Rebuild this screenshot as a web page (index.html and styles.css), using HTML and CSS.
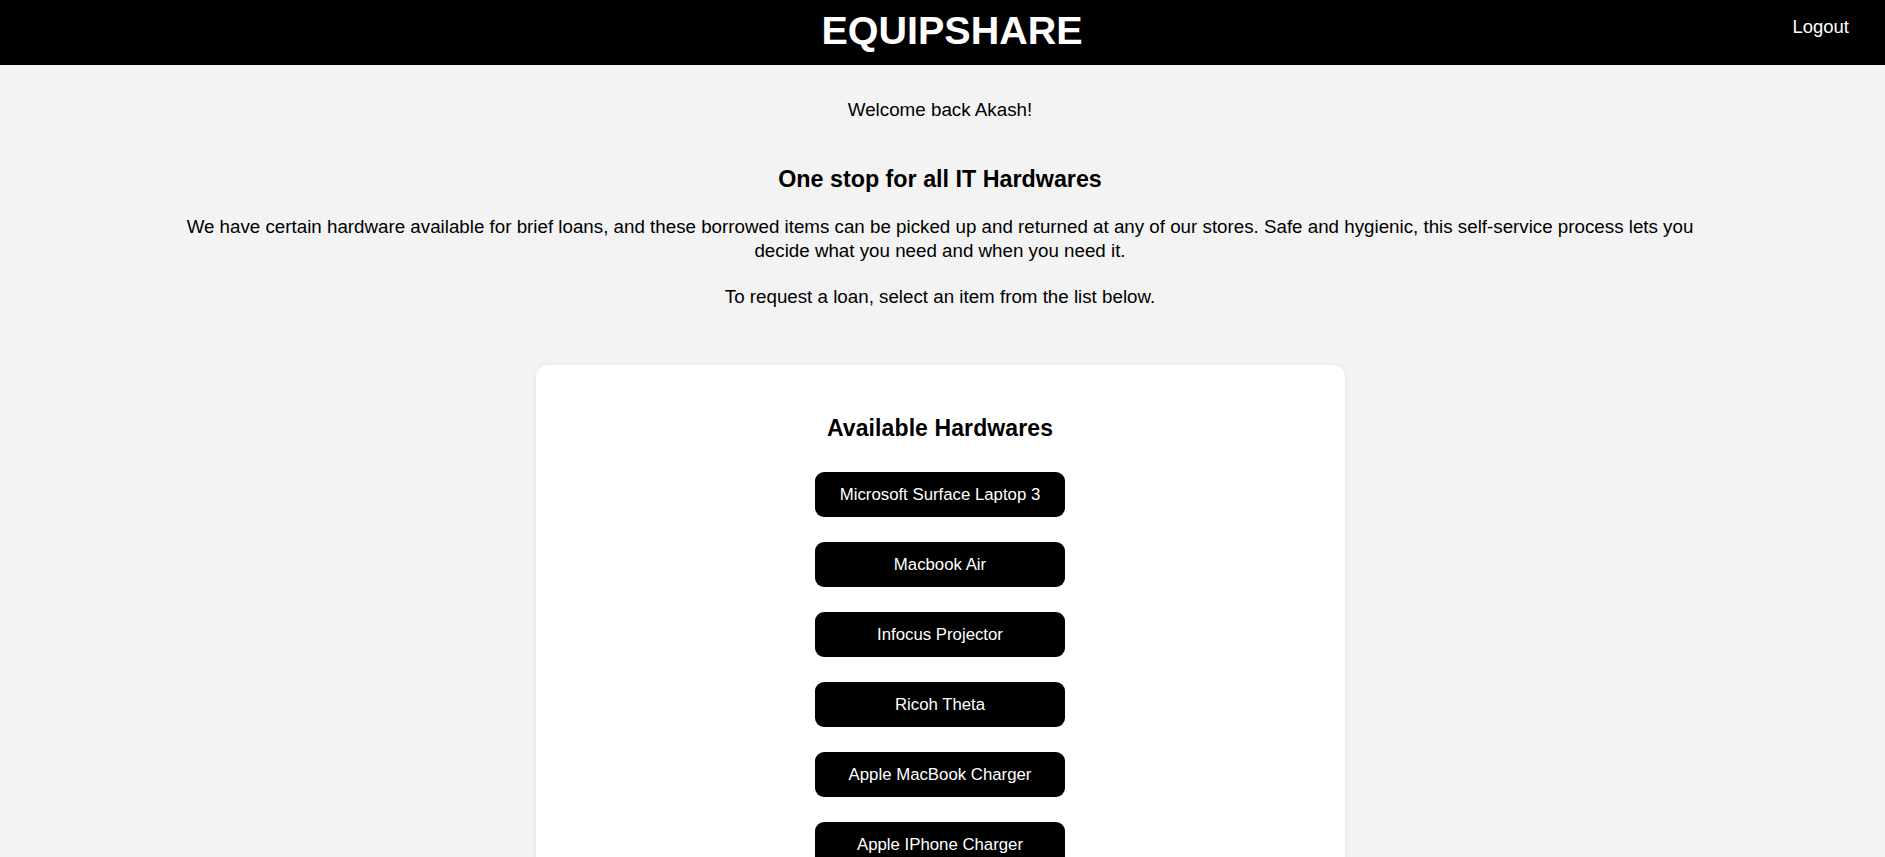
FILE: index.html
```html
<!DOCTYPE html>
<html lang="en">
<head>
<meta charset="utf-8">
<title>EquipShare</title>
<link rel="stylesheet" href="styles.css">
</head>
<body>
<header class="topbar">
  <div class="topbar-spacer"></div>
  <h1 class="brand">EQUIPSHARE</h1>
  <a class="logout" href="#">Logout</a>
</header>
<main class="page">
  <p class="welcome">Welcome back Akash!</p>
  <h2 class="tagline">One stop for all IT Hardwares</h2>
  <p class="intro">We have certain hardware available for brief loans, and these borrowed items can be picked up and returned at any of our stores. Safe and hygienic, this self-service process lets you decide what you need and when you need it.</p>
  <p class="hint">To request a loan, select an item from the list below.</p>
  <section class="card">
    <h3 class="card-title">Available Hardwares</h3>
    <ul class="hw-list">
      <li><button class="hw-btn">Microsoft Surface Laptop 3</button></li>
      <li><button class="hw-btn">Macbook Air</button></li>
      <li><button class="hw-btn">Infocus Projector</button></li>
      <li><button class="hw-btn">Ricoh Theta</button></li>
      <li><button class="hw-btn">Apple MacBook Charger</button></li>
      <li><button class="hw-btn">Apple IPhone Charger</button></li>
    </ul>
  </section>
</main>
</body>
</html>
```

FILE: styles.css
```css
* { box-sizing: border-box; }
html, body { margin: 0; padding: 0; }
body {
  background: #f3f3f3;
  color: #000;
  font-family: "Liberation Sans", Arial, sans-serif;
}
.topbar {
  display: grid;
  grid-template-columns: 1fr auto 1fr;
  align-items: start;
  height: 65px;
  background: #000;
  color: #fff;
}
.brand {
  margin: 0;
  padding: 7px 0 0 19px;
  font-size: 39.5px;
  line-height: 46px;
  font-weight: 700;
  letter-spacing: 0;
}
.logout {
  justify-self: end;
  padding: 16px 36px 0 0;
  color: #fff;
  text-decoration: none;
  font-size: 18.5px;
  line-height: 22px;
}
.page {
  display: flex;
  flex-direction: column;
  align-items: center;
  text-align: center;
  padding: 33px 5px 0 0;
}
.welcome {
  margin: 0;
  font-size: 18.8px;
  line-height: 24px;
}
.tagline {
  margin: 43px 0 0;
  font-size: 23.3px;
  line-height: 28px;
  font-weight: 700;
}
.intro {
  margin: 22px 0 0;
  max-width: 1540px;
  font-size: 18.75px;
  line-height: 24px;
}
.hint {
  margin: 22px 0 0;
  font-size: 18.75px;
  line-height: 24px;
}
.card {
  margin-top: 56px;
  width: 809px;
  background: #fff;
  border-radius: 12px;
  box-shadow: 0 1px 6px rgba(0, 0, 0, 0.07);
  padding: 49px 0 40px;
  display: flex;
  flex-direction: column;
  align-items: center;
}
.card-title {
  margin: 0;
  font-size: 23px;
  line-height: 28px;
  font-weight: 700;
  letter-spacing: 0.1px;
}
.hw-list {
  list-style: none;
  margin: 30px 0 0;
  padding: 0;
  display: flex;
  flex-direction: column;
  gap: 25px;
}
.hw-btn {
  width: 250px;
  height: 45px;
  border: 0;
  border-radius: 9px;
  background: #000;
  color: #fff;
  font-family: "Liberation Sans", Arial, sans-serif;
  font-size: 16.8px;
  cursor: pointer;
}
```
